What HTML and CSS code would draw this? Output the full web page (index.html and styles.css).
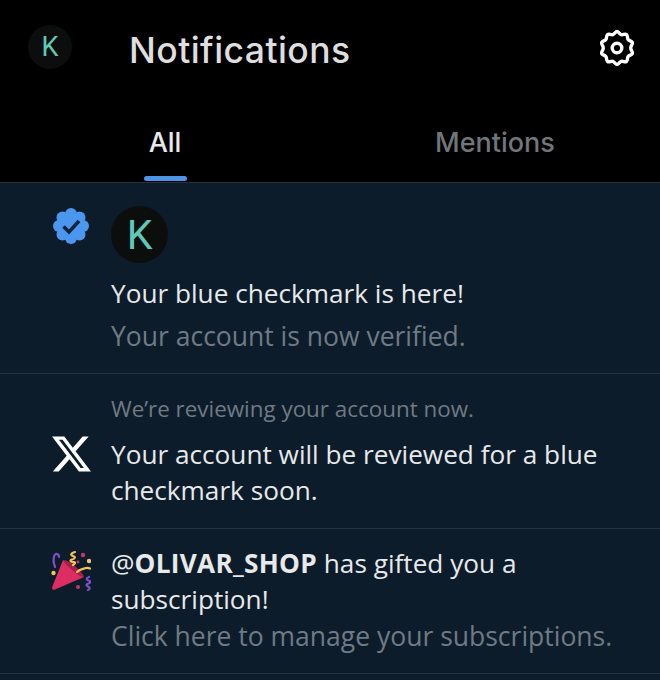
FILE: index.html
```html
<!DOCTYPE html>
<html lang="en">
<head>
    <meta charset="UTF-8">
    <meta name="viewport" content="width=device-width, initial-scale=1.0">
    <title>Notifications</title>
    <link rel="stylesheet" href="styles.css">
</head>
<body>
    <header class="topbar">
        <div class="avatar avatar-small">K</div>
        <h1>Notifications</h1>
        <svg class="gear" viewBox="0 0 38 38" fill="none" stroke="#fff" stroke-width="3.4" stroke-linejoin="round">
            <path d="M19 2.500c1.600 0 2.600 2.600 4.200 3.100 1.600.5 3.900-1 5.300-.1 1.300 1 .6 3.700 1.600 5 1 1.400 3.800 1.500 4.300 3.100.5 1.600-1.700 3.200-1.700 5.400s2.200 3.800 1.700 5.400c-.5 1.600-3.300 1.700-4.300 3.100-1 1.300-.3 4-1.600 5-1.400.9-3.700-.6-5.300-.1-1.600.5-2.600 3.100-4.200 3.100s-2.600-2.600-4.200-3.100c-1.600-.5-3.900 1-5.300.1-1.300-1-.6-3.700-1.600-5-1-1.400-3.800-1.500-4.300-3.100-.5-1.600 1.700-3.200 1.700-5.400s-2.200-3.800-1.700-5.400c.5-1.600 3.300-1.700 4.300-3.100 1-1.300.3-4 1.600-5 1.400-.9 3.700.6 5.300.1 1.600-.5 2.600-3.100 4.200-3.100z"/>
            <circle cx="19" cy="19" r="4.800"/>
        </svg>
    </header>

    <nav class="tabs">
        <div class="tab tab-active">All<span class="tab-line"></span></div>
        <div class="tab">Mentions</div>
    </nav>

    <main class="list">
        <section class="row row-verified">
            <div class="row-icon">
                <svg class="badge" viewBox="0 0 38 38">
                    <g fill="#4b97ef">
                        <circle cx="19" cy="19" r="14"/>
                        <circle cx="19" cy="7" r="6"/>
                        <circle cx="27.500" cy="10.500" r="6"/>
                        <circle cx="31" cy="19" r="6"/>
                        <circle cx="27.500" cy="27.500" r="6"/>
                        <circle cx="19" cy="31" r="6"/>
                        <circle cx="10.500" cy="27.500" r="6"/>
                        <circle cx="7" cy="19" r="6"/>
                        <circle cx="10.500" cy="10.500" r="6"/>
                    </g>
                    <path fill="none" stroke="#10233a" stroke-width="3.600" d="M11.500 19.500l5.500 5.500 10-11"/>
                </svg>
            </div>
            <div class="row-body">
                <div class="avatar avatar-large">K</div>
                <p class="line line-first">Your blue checkmark is here!</p>
                <p class="line line-muted">Your account is now verified.</p>
            </div>
        </section>

        <section class="row row-review">
            <div class="row-icon">
                <svg class="x-logo" viewBox="1.250 2.250 21.600 19.500">
                    <path fill="#fff" d="M18.244 2.250h3.308l-7.227 8.260 8.502 11.240H16.170l-5.214-6.817L4.990 21.750H1.680l7.730-8.835L1.254 2.250H8.080l4.713 6.231zm-1.161 17.520h1.833L7.084 4.126H5.117z"/>
                </svg>
            </div>
            <div class="row-body">
                <p class="small-muted">We’re reviewing your account now.</p>
                <p class="line">Your account will be reviewed for a blue checkmark soon.</p>
            </div>
        </section>

        <section class="row row-gift">
            <div class="row-icon">
                <svg class="party" viewBox="0 0 40 42">
                    <path fill="#dd2e63" d="M12 10L33 27 4 39.500c-2 .8-3.500-.7-2.800-2.500z"/>
                    <path fill="#a3214a" d="M12 10c4 0 9 3 14 8 5 4 7 8 7 9-3 0-8-3-13-8-5-4-8-8-8-9z"/>
                    <path fill="none" stroke="#7b52c9" stroke-width="2.200" stroke-linecap="round" d="M4 17C1 10 3 3 6 4c2 .5 2 2 2 3"/>
                    <path fill="none" stroke="#f5c453" stroke-width="2.200" stroke-linecap="round" d="M24 2c-4 1-5 3-2 4 3 .5 2 3-1 3.500-3 1-1 3 2 2.500 2 0 1 2-1 3"/>
                    <path fill="none" stroke="#f5c453" stroke-width="2.200" stroke-linecap="round" d="M26 22c3-3 6-3 9-4 2-.5 3 0 4 .5"/>
                    <path fill="none" stroke="#7b52c9" stroke-width="2.200" stroke-linecap="round" d="M38 27c-3 1-3 3-.5 3.500s2 2.500 0 3-3 2-.5 3 2 2.500 0 3.500"/>
                    <circle cx="32" cy="5" r="2.200" fill="#c4366f"/>
                    <circle cx="38" cy="11" r="2.200" fill="#f3c27a"/>
                    <circle cx="27" cy="12" r="1.400" fill="#c4366f"/>
                    <circle cx="2.500" cy="23" r="2.200" fill="#f5c453"/>
                    <circle cx="27" cy="37" r="2" fill="#c4366f"/>
                </svg>
            </div>
            <div class="row-body">
                <p class="line">@<span class="handle">OLIVAR_SHOP</span> has gifted you a subscription!</p>
                <p class="line line-muted">Click here to manage your subscriptions.</p>
            </div>
        </section>
    </main>
</body>
</html>
```

FILE: styles.css
```css
html, body {
    height: 100%;
}
body {
    margin: 0;
    font-family: "Open Sans", Roboto, sans-serif;
    background-color: #0d1c2a;
    color: #e7e9ea;
    overflow: hidden;
}
p, h1 {
    margin: 0;
    font-weight: 400;
}
.topbar {
    height: 100px;
    background-color: #000;
    display: flex;
    align-items: center;
    padding: 0 24px 0 28px;
    box-sizing: border-box;
}
.topbar h1 {
    flex: 1;
    margin-left: 57px;
    font-family: Inter, Roboto, sans-serif;
    font-size: 35.5px;
    font-weight: 500;
    letter-spacing: 0.45px;
    color: #dedede;
}
.avatar {
    border-radius: 50%;
    background-color: #0c0e0e;
    color: #5fc9b7;
    font-family: Roboto, sans-serif;
    display: flex;
    align-items: center;
    justify-content: center;
    flex-shrink: 0;
}
.avatar-small {
    width: 44px;
    height: 44px;
    margin-bottom: 6px;
    font-size: 27px;
}
.avatar-large {
    width: 57px;
    height: 57px;
    font-size: 41px;
}
.gear {
    width: 38px;
    height: 38px;
    margin-bottom: 4px;
}
.tabs {
    height: 83px;
    background-color: #000;
    display: flex;
    border-bottom: 1px solid #25323d;
    box-sizing: border-box;
}
.tab {
    flex: 1;
    position: relative;
    text-align: center;
    padding-top: 26px;
    font-family: Inter, Roboto, sans-serif;
    font-size: 27px;
    font-weight: 500;
    color: #70767b;
}
.tab-active {
    color: #e7e9ea;
}
.tab-line {
    position: absolute;
    left: 50%;
    bottom: 1px;
    width: 43px;
    height: 5px;
    margin-left: -21px;
    border-radius: 3px;
    background-color: #4d94e6;
}
.row {
    display: flex;
    border-bottom: 1px solid #25323d;
    box-sizing: border-box;
}
.row-verified {
    height: 191px;
    padding-top: 23px;
}
.row-review {
    height: 155px;
    padding-top: 21px;
}
.row-gift {
    height: 145px;
    padding-top: 16px;
}
.row-icon {
    width: 111px;
    flex-shrink: 0;
    display: flex;
    justify-content: center;
    padding-left: 31px;
    box-sizing: border-box;
}
.row-body {
    flex: 1;
    padding-right: 40px;
}
.badge {
    width: 38px;
    height: 38px;
    margin-top: 1px;
}
.x-logo {
    width: 39px;
    height: 36px;
    margin-top: 41px;
}
.party {
    width: 40px;
    height: 42px;
    margin-top: 5px;
}
.line {
    font-size: 26.2px;
    line-height: 36px;
}
.line-first {
    margin-top: 12px;
}
.line-muted {
    color: #6f7a84;
    font-size: 26.5px;
    margin-top: 1px;
}
.row-verified .line-muted {
    margin-top: 7px;
}
.handle {
    font-weight: 700;
    letter-spacing: 0.3px;
}
.small-muted {
    font-size: 22.4px;
    line-height: 28px;
    margin-bottom: 13px;
    color: #6f7a84;
}
```
